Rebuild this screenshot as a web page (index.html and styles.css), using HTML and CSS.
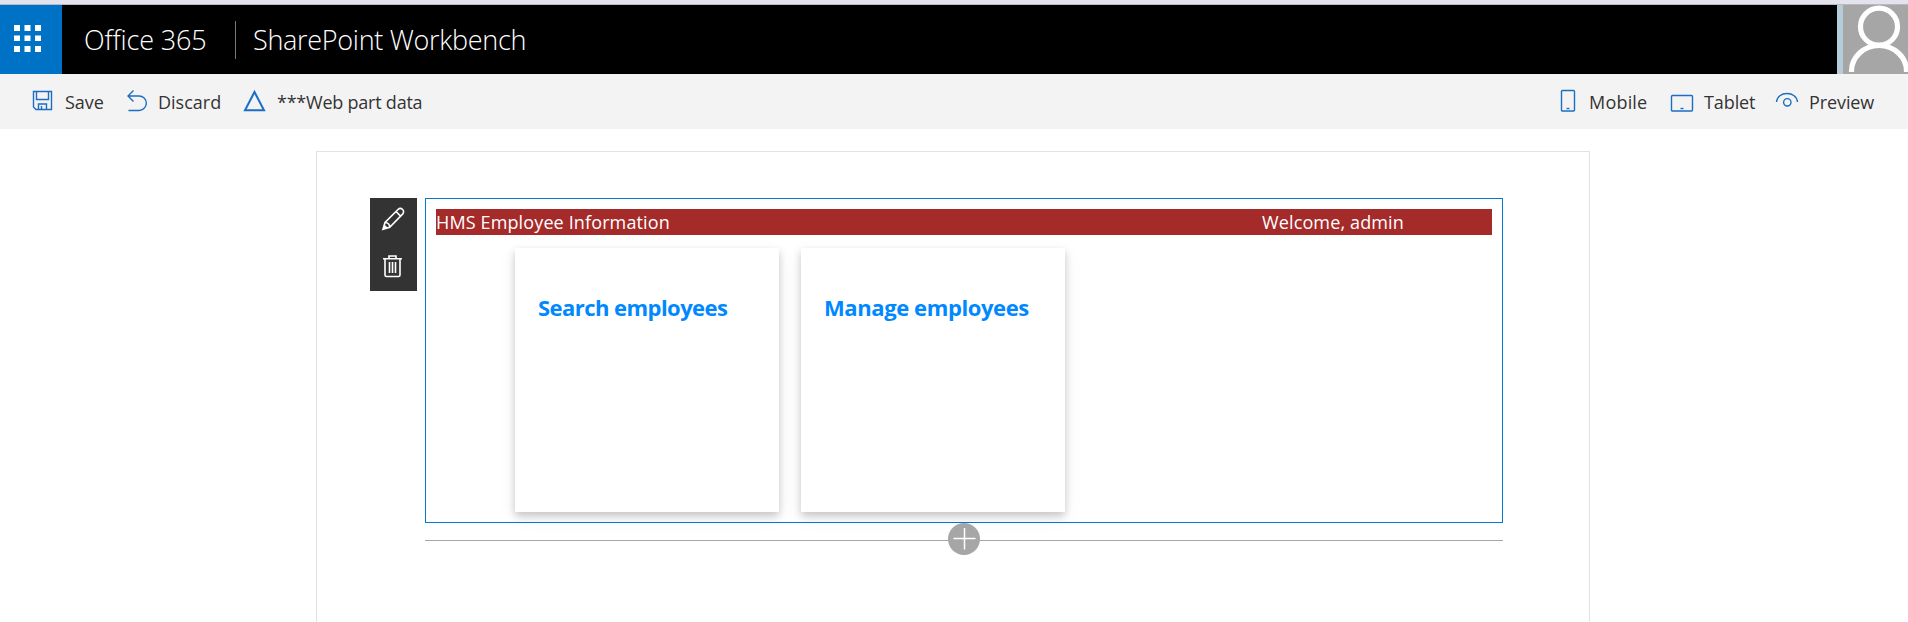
FILE: index.html
```html
<!DOCTYPE html>
<html lang="en">
<head>
<meta charset="utf-8">
<title>SharePoint Workbench</title>
<link rel="stylesheet" href="styles.css">
</head>
<body>
<header class="suite-bar">
  <button class="launcher" aria-label="App launcher">
    <svg width="27" height="27" viewBox="0 0 27 27" fill="#fff"><path d="M0 0h6v6H0zM10.500 0h6v6h-6zM21 0h6v6h-6zM0 10.500h6v5.500H0zM10.500 10.500h6v5.500h-6zM21 10.500h6v5.500h-6zM0 21h6v6H0zM10.500 21h6v6h-6zM21 21h6v6h-6z"/></svg>
  </button>
  <span class="brand">Office 365</span>
  <span class="app-name">SharePoint Workbench</span>
  <div class="avatar">
    <svg width="65" height="69" viewBox="0 0 65 69" fill="none" stroke="#fff" stroke-width="5.200"><circle cx="36" cy="21.700" r="18.500"/><path d="M8.500 67v-1C8.500 52 21 40.500 36 40.500S63.500 52 63.500 66v1"/></svg>
  </div>
</header>
<nav class="command-bar">
  <div class="cmd cmd-save">
    <svg class="icon" width="24" height="24" viewBox="0 0 24 24"><path d="M1.500 2.500h18v18h-15.500l-2.500-2.500zM4.500 2.500v8h12v-8M6.500 20.500v-5.500h8v5.500M9.500 20v-3"/></svg>
    <span class="label">Save</span>
  </div>
  <div class="cmd cmd-discard">
    <svg class="icon" width="24" height="24" viewBox="0 0 24 24"><path d="M7.500 1.500L2 7l5.500 5.500M2 7h11c4 0 7.300 3.200 7.300 7.200s-3.300 7.300-7.300 7.300H2.500"/></svg>
    <span class="label">Discard</span>
  </div>
  <div class="cmd cmd-data">
    <svg class="icon" width="24" height="24" viewBox="0 0 24 24"><path class="bold" d="M11.500 3L21 21.300H2z"/></svg>
    <span class="label">***Web part data</span>
  </div>
  <div class="cmd cmd-mobile">
    <svg class="icon" width="24" height="24" viewBox="0 0 24 24"><rect x="1.500" y="1.500" width="13" height="20.500" rx="1"/><path d="M6.500 19.500h3"/></svg>
    <span class="label">Mobile</span>
  </div>
  <div class="cmd cmd-tablet">
    <svg class="icon" width="24" height="24" viewBox="0 0 24 24"><rect x="1.500" y="6.500" width="21" height="15.500" rx="1"/><path d="M10.500 19.500h3"/></svg>
    <span class="label">Tablet</span>
  </div>
  <div class="cmd cmd-preview">
    <svg class="icon" width="24" height="24" viewBox="0 0 24 24"><path d="M1.500 13C2 7.500 6.500 4.500 12 4.500S22 7.500 22.500 13"/><circle cx="12.300" cy="13.300" r="3.700"/></svg>
    <span class="label">Preview</span>
  </div>
</nav>
<main class="page-canvas">
  <div class="zone">
    <aside class="tools">
      <svg width="24" height="24" viewBox="0 0 24 24" fill="none" stroke="#fff" stroke-width="1.600"><path d="M2 22.200L4 15.500 17 2.500c1.300-1.300 3.300-1.300 4.600 0s1.300 3.300 0 4.600L8.700 20.200zM4 15.500c2.800 0 4.700 2 4.700 4.700M15 4.500l4.600 4.600M2 22.200l2-3 1 1z"/></svg>
      <svg width="24" height="24" viewBox="0 0 24 24" fill="none" stroke="#fff" stroke-width="1.600"><path d="M2 4.700h19M8 4.500V2h7v2.500M4 5v16c0 1 .500 1.500 1.500 1.500h12c1 0 1.500-.500 1.500-1.500V5M8.500 8v11M11.500 8v11M14.500 8v11"/></svg>
    </aside>
    <div class="column">
      <section class="web-part">
        <div class="banner">
          <span class="banner-title">HMS Employee Information</span>
          <span class="welcome">Welcome, admin</span>
        </div>
        <div class="cards">
          <article class="card"><h2 class="card-title search">Search employees</h2></article>
          <article class="card"><h2 class="card-title manage">Manage employees</h2></article>
        </div>
      </section>
      <div class="add-row">
        <span class="rule"></span>
        <svg class="add" width="32" height="32" viewBox="0 0 32 32"><circle cx="16" cy="16" r="16" fill="#a6a6a6"/><path d="M5.500 15.500h22M16.500 5v21.500" stroke="#fff" stroke-width="1.500"/></svg>
        <span class="rule"></span>
      </div>
    </div>
  </div>
</main>
</body>
</html>
```
FILE: styles.css
```css
* { box-sizing: border-box; }
body {
  margin: 0;
  height: 622px;
  overflow: hidden;
  background: #fff;
  color: #333;
  font-family: "Segoe UI", "Open Sans", "Noto Sans", sans-serif;
  display: flex;
  flex-direction: column;
}
.suite-bar {
  flex: none;
  display: flex;
  align-items: center;
  height: 74px;
  border-top: 4px solid #e3e3ee;
  background: #000;
  color: #fff;
  font-size: 27px;
  font-weight: 300;
  line-height: 38px;
  white-space: nowrap;
  box-shadow: inset 0 1px #b9b9c4;
  padding-top: 1px;
}
.launcher {
  width: 62px;
  height: 69px;
  padding: 0 0 2px 14px;
  border: 0;
  background: #0072c6;
  display: flex;
  align-items: center;
}
.brand { width: 174px; padding-left: 22px; border-right: 1px solid #777; letter-spacing: -0.13px; }
.app-name { padding-left: 17px; letter-spacing: -0.3px; }
.avatar { margin-left: auto; width: 71px; height: 69px; border-left: 6px solid #b4cdd8; background: #a6a6a6; }
.avatar svg { display: block; }

.command-bar {
  flex: none;
  display: flex;
  height: 55px;
  padding-left: 32px;
  background: #f3f3f3;
  font-size: 18px;
  line-height: 26px;
  white-space: nowrap;
}
.cmd { display: flex; padding-top: 15px; }
.cmd .icon { flex: none; fill: none; stroke: #1b6ec2; stroke-width: 1.4; }
.icon .bold { stroke-width: 2; }
.cmd-save { width: 94px; gap: 9px; }
.cmd-discard { width: 117px; gap: 8px; }
.cmd-data { gap: 10px; letter-spacing: -0.23px; }
.cmd-mobile { margin-left: auto; width: 110px; gap: 5px; letter-spacing: 0.2px; }
.cmd-tablet { width: 105px; gap: 10px; letter-spacing: -0.1px; }
.cmd-preview { width: 133px; gap: 10px; letter-spacing: -0.1px; }

.page-canvas {
  flex: 1;
  width: 1274px;
  margin: 22px 0 0 316px;
  padding: 46px 0 0 53px;
  border: 1px solid #e2e2e2;
  border-bottom: 0;
}
.zone { display: flex; gap: 8px; align-items: flex-start; }
.tools {
  width: 47px;
  height: 93px;
  padding: 9px 0 0 11px;
  display: flex;
  flex-direction: column;
  gap: 23px;
  background: #333;
}
.column { width: 1078px; }
.web-part { height: 325px; padding: 10px; border: 1px solid #0078d4; }
.banner {
  display: flex;
  height: 26px;
  background: #a52a2a;
  color: #fff;
  font-size: 18px;
  line-height: 27px;
  letter-spacing: 0.13px;
  white-space: nowrap;
}
.banner-title { width: 826px; }
.cards { display: flex; gap: 22px; padding: 13px 0 0 79px; }
.card {
  width: 264px;
  height: 264px;
  padding: 44px 0 0 23px;
  background: #fff;
  box-shadow: 0 4px 8px rgba(0,0,0,.2), 0 6px 20px rgba(0,0,0,.05);
}
.card-title { margin: 0; color: #08f; font-size: 22px; line-height: 30px; font-weight: 700; white-space: nowrap; }
.search { letter-spacing: -0.55px; }
.manage { letter-spacing: -0.4px; }
.add-row { display: flex; height: 32px; align-items: center; }
.rule { flex: 1; height: 1px; margin-top: 3px; background: #a6a6a6; }
```
